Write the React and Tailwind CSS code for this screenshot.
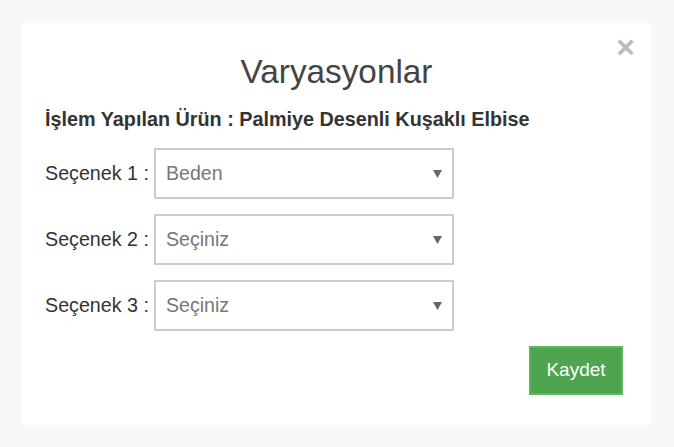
export default function App() {
  const rows = [
    { label: "Seçenek 1 :", value: "Beden" },
    { label: "Seçenek 2 :", value: "Seçiniz" },
    { label: "Seçenek 3 :", value: "Seçiniz" },
  ];
  return (
    <div
      className="w-[674px] h-[447px] bg-[#f8f8f8] pt-[23px] pl-[22px]"
      style={{ fontFamily: '"Liberation Sans", Arial, sans-serif' }}
    >
      <div className="relative w-[629px] h-[402px] bg-white flex flex-col">
        <button className="absolute right-[16px] top-[8px] text-[32px] leading-none font-bold text-[#bbbbbb]">
          ×
        </button>
        <h2 className="mt-[31px] text-center text-[33.3px] leading-[35px] text-[#444444]">
          Varyasyonlar
        </h2>
        <div className="mt-[21px] pl-[23px] text-[19.8px] leading-[18px] font-bold text-[#333333]">
          İşlem Yapılan Ürün : Palmiye Desenli Kuşaklı Elbise
        </div>
        <div className="mt-[20px] pl-[23px] flex flex-col gap-[15px]">
          {rows.map((r) => (
            <div key={r.label} className="flex items-center">
              <span className="w-[109px] text-[19.7px] text-[#333333]">{r.label}</span>
              <div className="w-[300px] h-[51px] border-2 border-[#cccccc] flex items-center justify-between pl-[10px] pr-[10px]">
                <span className="text-[19.6px] text-[#777777]">{r.value}</span>
                <svg width="9" height="8" viewBox="0 0 9 8">
                  <path d="M0 0 H9 L4.5 8 Z" fill="#666666" />
                </svg>
              </div>
            </div>
          ))}
        </div>
        <div className="flex justify-end pr-[28px] mt-[15px]">
          <button className="w-[94px] h-[49px] bg-[#4fa44f] border-2 border-[#5cb85c] text-white text-[19px]">
            Kaydet
          </button>
        </div>
      </div>
    </div>
  );
}
